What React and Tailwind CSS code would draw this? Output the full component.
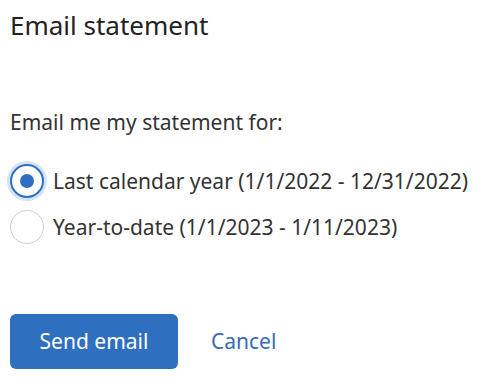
import React, { useState } from "react";

function Radio({ checked, onClick, children }) {
  return (
    <label className="flex items-center gap-[9px] cursor-pointer" onClick={onClick}>
      <span
        className={
          checked
            ? "flex items-center justify-center w-[34px] h-[34px] rounded-full border-2 border-[#2f6fc0] bg-white shadow-[0_0_0_3px_#d3e4f7]"
            : "flex items-center justify-center w-[34px] h-[34px] rounded-full border border-[#cfcfcf] bg-white"
        }
      >
        {checked && <span className="w-[14px] h-[14px] rounded-full bg-[#2f6fc0]" />}
      </span>
      <span className="text-[21px] leading-[28px] text-[#333]">{children}</span>
    </label>
  );
}

export default function App() {
  const [choice, setChoice] = useState("last");

  return (
    <div className="w-[500px] h-[385px] bg-white font-['Noto_Sans',sans-serif] px-[10px] pt-[8px]">
      <h2 className="text-[26px] text-[#222] leading-[34px]">Email statement</h2>
      <p className="mt-[66px] text-[21px] leading-[28px] text-[#333]">Email me my statement for:</p>
      <div className="mt-[28px] flex flex-col gap-[12px]">
        <Radio checked={choice === "last"} onClick={() => setChoice("last")}>
          Last calendar year (1/1/2022 - 12/31/2022)
        </Radio>
        <Radio checked={choice === "ytd"} onClick={() => setChoice("ytd")}>
          Year-to-date (1/1/2023 - 1/11/2023)
        </Radio>
      </div>
      <div className="mt-[70px] flex items-center">
        <button className="w-[168px] h-[55px] rounded-[6px] bg-[#2f6fc0] text-white text-[21px]">
          Send email
        </button>
        <button className="ml-[33px] text-[21px] text-[#3a6bb5]">Cancel</button>
      </div>
    </div>
  );
}
